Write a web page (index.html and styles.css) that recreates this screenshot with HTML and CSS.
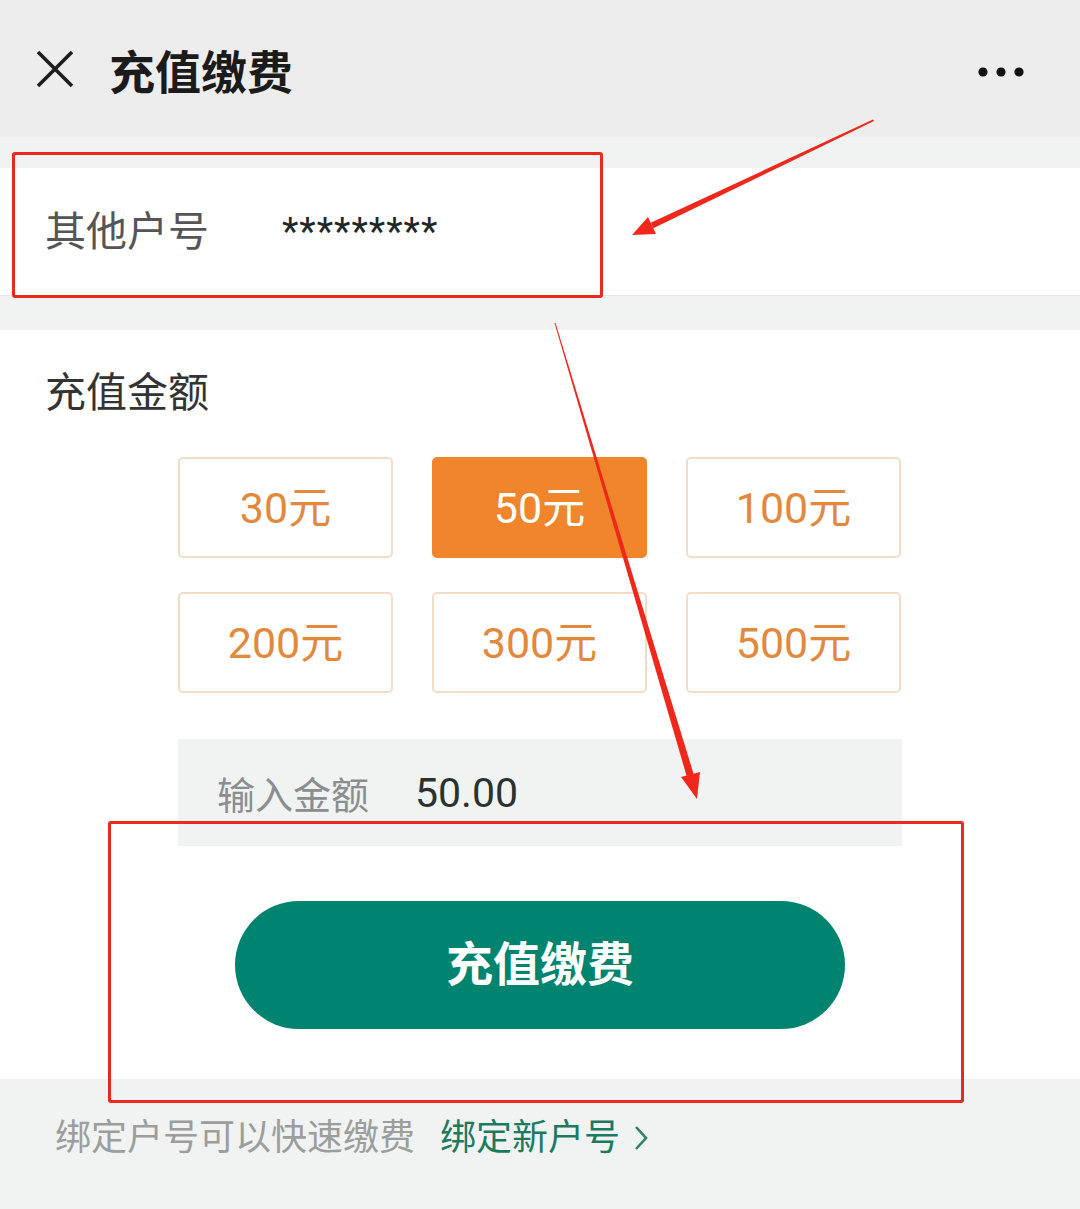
FILE: index.html
```html
<!DOCTYPE html>
<html lang="zh-CN">
<head>
    <meta charset="UTF-8">
    <meta name="viewport" content="width=device-width, initial-scale=1.0">
    <title>充值缴费</title>
    <link rel="stylesheet" href="styles.css">
</head>
<body>

<div class="page">
    <header class="top-bar">
        <svg class="close-icon" width="40" height="40" viewBox="0 0 40 40">
            <path d="M3 3 L37 37 M37 3 L3 37" stroke="#1e1e1e" stroke-width="3.6" fill="none"/>
        </svg>
        <h1>充值缴费</h1>
        <svg class="more-icon" width="48" height="12" viewBox="0 0 48 12">
            <circle cx="6" cy="6" r="4.6" fill="#111"/>
            <circle cx="24" cy="6" r="4.6" fill="#111"/>
            <circle cx="42" cy="6" r="4.6" fill="#111"/>
        </svg>
    </header>

    <div class="account-row">
        <span class="account-label">其他户号</span>
        <span class="account-value">*********</span>
    </div>

    <section class="amount-section">
        <h2>充值金额</h2>
        <div class="amount-grid">
            <button class="amount">30元</button>
            <button class="amount selected">50元</button>
            <button class="amount">100元</button>
            <button class="amount">200元</button>
            <button class="amount">300元</button>
            <button class="amount">500元</button>
        </div>
        <div class="input-row">
            <span class="input-label">输入金额</span>
            <span class="input-value">50.00</span>
        </div>
        <button class="pay-button">充值缴费</button>
    </section>

    <footer class="bind-tip">
        <span class="tip-text">绑定户号可以快速缴费</span>
        <a class="bind-link" href="#">绑定新户号<svg class="chevron" width="14" height="26" viewBox="0 0 14 26">
                <path d="M2 2 L12 13 L2 24" stroke="#2f8068" stroke-width="2.6" fill="none"/>
            </svg></a>
    </footer>

    <!-- annotation marks drawn over the screenshot -->
    <div class="mark mark-account"></div>
    <div class="mark mark-pay"></div>
    <svg class="arrows" width="1080" height="1209" viewBox="0 0 1080 1209">
        <polygon fill="#f0281c" points="873,119.5 874,121 653.3,228.2 650.7,222.8"/>
        <polygon fill="#f0281c" points="632,235 648,217 656,234"/>
        <polygon fill="#f0281c" points="554.5,323 555.5,323 693.6,774 686.6,776"/>
        <polygon fill="#f0281c" points="697,799 681,777 700,772"/>
    </svg>
</div>

</body>
</html>
```

FILE: styles.css
```css
body {
    margin: 0;
    padding: 0;
    font-family: Roboto, "Noto Sans CJK SC", sans-serif;
    background-color: #f1f3f2;
}

.page {
    position: relative;
    width: 1080px;
    height: 1209px;
    overflow: hidden;
}

.top-bar {
    height: 137px;
    background-color: #ededed;
    display: flex;
    align-items: center;
    padding: 0 55px 0 35px;
}

.top-bar h1 {
    margin: 0 0 0 34px;
    font-size: 46px;
    font-weight: bold;
    color: #1b1b1b;
    flex: 1;
}

.more-icon {
    margin-top: 6px;
}

.account-row {
    margin-top: 31px;
    height: 127px;
    background-color: #fff;
    border-bottom: 1px solid #e6e8e7;
    display: flex;
    align-items: center;
    padding-left: 45px;
}

.account-label {
    width: 237px;
    font-size: 41px;
    color: #555;
    margin-top: -8px;
}

.account-value {
    font-size: 38px;
    color: #1f2828;
    letter-spacing: 1px;
}

.amount-section {
    margin-top: 34px;
    background-color: #fff;
    padding: 35px 0 50px;
}

.amount-section h2 {
    margin: 0 0 36px 45px;
    font-size: 41px;
    line-height: 56px;
    font-weight: normal;
    color: #333;
}

.amount-grid {
    display: grid;
    grid-template-columns: repeat(3, 215px);
    grid-auto-rows: 101px;
    column-gap: 39px;
    row-gap: 34px;
    margin-left: 178px;
}

.amount {
    border: 2px solid #f3dcc8;
    border-radius: 5px;
    background-color: #fff;
    color: #e2893d;
    font-family: Roboto, "Noto Sans CJK SC", sans-serif;
    font-size: 43px;
    padding: 0 0 8px;
}

.amount.selected {
    background-color: #f0852c;
    border-color: #f0852c;
    color: #fff;
}

.input-row {
    margin: 46px 0 0 178px;
    width: 724px;
    height: 107px;
    background-color: #f1f3f3;
    display: flex;
    align-items: center;
    padding-left: 39px;
    box-sizing: border-box;
}

.input-label {
    font-size: 38px;
    color: #8a8e8d;
    margin-right: 46px;
}

.input-value {
    font-size: 41px;
    color: #2b3131;
}

.pay-button {
    display: block;
    margin: 55px auto 0;
    width: 610px;
    height: 128px;
    border: none;
    border-radius: 64px;
    background-color: #008470;
    color: #fff;
    font-family: "Noto Sans CJK SC", sans-serif;
    font-size: 47px;
    font-weight: bold;
    padding: 0 0 10px;
}

.bind-tip {
    padding: 34px 0 0 55px;
    font-size: 36px;
    line-height: 50px;
}

.tip-text {
    color: #9a9e9d;
    margin-right: 16px;
}

.bind-link {
    color: #1c7a5f;
    text-decoration: none;
}

.chevron {
    margin-left: 14px;
    vertical-align: -1px;
}

.mark {
    position: absolute;
    border: 3px solid #ea2a20;
    border-radius: 3px;
}

.mark-account {
    left: 12px;
    top: 152px;
    width: 585px;
    height: 140px;
}

.mark-pay {
    left: 108px;
    top: 821px;
    width: 850px;
    height: 276px;
}

.arrows {
    position: absolute;
    left: 0;
    top: 0;
}
```
